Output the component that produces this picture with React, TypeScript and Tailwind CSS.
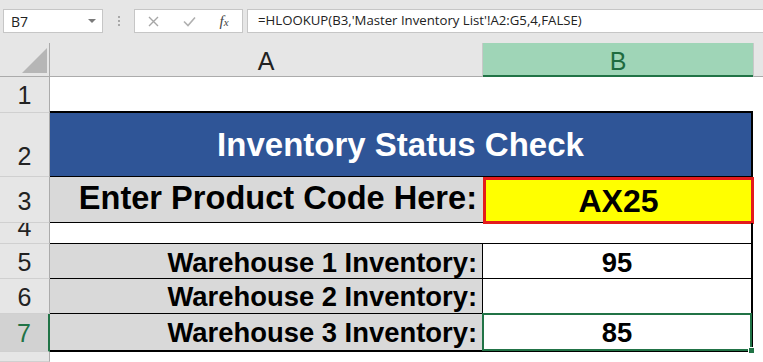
import React from "react";

function RowHead({ label, h, pad, selected }: { label: string; h: string; pad: string; selected?: boolean }) {
  return (
    <div
      className={
        "w-[50px] shrink-0 flex justify-center overflow-hidden text-[25px] leading-none border-b border-b-[#d0d0d0] " +
        pad +
        " " +
        h +
        (selected
          ? " bg-[#d2d2d2] text-[#217346] border-r-2 border-r-[#217346]"
          : " bg-[#e6e6e6] text-[#222] border-r border-r-[#ababab]")
      }
    >
      <span>{label}</span>
    </div>
  );
}

export default function App() {
  return (
    <div className="w-[763px] h-[362px] overflow-hidden bg-white font-['Liberation_Sans',Arial,sans-serif] text-black">
      {/* formula bar */}
      <div className="h-[43px] bg-[#e6e6e6] flex items-start pt-[9px] pl-[3px]">
        <div className="w-[100px] h-[24px] shrink-0 bg-white border border-[#c6c6c6] flex items-center justify-between pl-[7px] pr-[6px]">
          <span className="text-[14px] text-[#222] font-['Open_Sans',sans-serif]">B7</span>
          <svg width="8" height="5" viewBox="0 0 8 5">
            <polygon points="0,0 8,0 4,4" fill="#7a7a7a" />
          </svg>
        </div>
        <div className="w-[31px] h-[24px] shrink-0 flex flex-col items-center justify-center gap-[2px]">
          <div className="w-[2px] h-[2px] bg-[#a8a8a8]" />
          <div className="w-[2px] h-[2px] bg-[#a8a8a8]" />
          <div className="w-[2px] h-[2px] bg-[#a8a8a8]" />
        </div>
        <div className="w-[109px] h-[24px] shrink-0 bg-white border border-[#c6c6c6] flex items-center">
          <div className="w-[37px] flex justify-center">
            <svg width="11" height="11" viewBox="0 0 11 11">
              <path d="M1 1 L10 10 M10 1 L1 10" stroke="#a6a6a6" strokeWidth="1.4" fill="none" />
            </svg>
          </div>
          <div className="w-[34px] flex justify-center">
            <svg width="13" height="11" viewBox="0 0 13 11">
              <path d="M1 5.5 L5 9.5 L12 1.5" stroke="#b0b0b0" strokeWidth="1.6" fill="none" />
            </svg>
          </div>
          <div className="w-[36px] flex justify-center">
            <span className="font-['Liberation_Serif',serif] italic text-[15px] text-[#444] leading-none">
              f<span className="text-[11px]">x</span>
            </span>
          </div>
        </div>
        <div className="ml-[4px] flex-1 h-[24px] bg-white border-y border-l border-[#c6c6c6] flex items-center pl-[10px]">
          <span className="text-[13.2px] text-[#222] font-['Open_Sans',sans-serif] whitespace-nowrap">
            =HLOOKUP(B3,'Master Inventory List'!A2:G5,4,FALSE)
          </span>
        </div>
      </div>

      {/* column headers */}
      <div className="h-[34px] flex">
        <div className="w-[50px] shrink-0 bg-[#e6e6e6] border-r border-r-[#ababab] border-b border-b-[#ababab]">
          <svg width="49" height="33" viewBox="0 0 49 33">
            <polygon points="22,30 47,30 47,5" fill="#b6b6b6" />
          </svg>
        </div>
        <div className="w-[433px] shrink-0 bg-[#e6e6e6] border-r border-r-[#c8c8c8] border-b border-b-[#ababab] flex justify-center items-end pb-[2px] text-[25px] leading-none text-[#222]">
          A
        </div>
        <div className="w-[270px] shrink-0 bg-[#9fd5b7] border-b-2 border-b-[#217346] flex justify-center items-end pb-[1px] text-[25px] leading-none text-[#1e6b3f]">
          B
        </div>
        <div className="flex-1 bg-[#e6e6e6] border-l border-l-[#c8c8c8] border-b border-b-[#ababab]" />
      </div>

      {/* row 1 */}
      <div className="flex">
        <RowHead label="1" h="h-[36px]" pad="items-end pb-[4px]" />
        <div className="w-[703px] shrink-0 border-b-2 border-b-black" />
        <div className="flex-1" />
      </div>

      {/* row 2 */}
      <div className="flex">
        <RowHead label="2" h="h-[64px]" pad="items-end pb-[7px]" />
        <div className="w-[703px] h-[64px] shrink-0 bg-[#2f5597] border-r-2 border-r-black border-b border-b-black flex items-center justify-center">
          <span className="text-white font-bold text-[33px] leading-none whitespace-nowrap">Inventory Status Check</span>
        </div>
        <div className="flex-1" />
      </div>

      {/* row 3 */}
      <div className="flex">
        <RowHead label="3" h="h-[46px]" pad="items-end pb-[8px]" />
        <div className="w-[433px] h-[46px] shrink-0 bg-[#d9d9d9] border-b border-b-black flex justify-end items-end pr-[6px] pb-[7px]">
          <span className="font-bold text-[32.6px] leading-none whitespace-nowrap">Enter Product Code Here:</span>
        </div>
        <div className="w-[271px] h-[47px] shrink-0 bg-[#ffff00] border-[3px] border-[#e41b1b] flex justify-center items-center">
          <span className="font-bold text-[32px] leading-none">AX25</span>
        </div>
        <div className="flex-1" />
      </div>

      {/* row 4 */}
      <div className="flex -mt-[1px]">
        <RowHead label="4" h="h-[21px]" pad="items-end pb-[3px]" />
        <div className="w-[433px] h-[21px] shrink-0 border-b border-b-black" />
        <div className="w-[270px] h-[21px] shrink-0 border-b border-b-black border-r-2 border-r-black" />
        <div className="flex-1" />
      </div>

      {/* row 5 */}
      <div className="flex">
        <RowHead label="5" h="h-[35px]" pad="items-end pb-[3px]" />
        <div className="w-[433px] h-[35px] shrink-0 bg-[#d9d9d9] border-b border-b-black border-r border-r-black flex justify-end items-end pr-[5px] pb-[2px]">
          <span className="font-bold text-[27.4px] leading-none whitespace-nowrap">Warehouse 1 Inventory:</span>
        </div>
        <div className="w-[270px] h-[35px] shrink-0 border-b border-b-black border-r-2 border-r-black flex justify-center items-end pb-[2px]">
          <span className="font-bold text-[27.4px] leading-none">95</span>
        </div>
        <div className="flex-1" />
      </div>

      {/* row 6 */}
      <div className="flex">
        <RowHead label="6" h="h-[35px]" pad="items-end pb-[3px]" />
        <div className="w-[433px] h-[35px] shrink-0 bg-[#d9d9d9] border-b border-b-black border-r border-r-black flex justify-end items-end pr-[5px] pb-[3px]">
          <span className="font-bold text-[27.4px] leading-none whitespace-nowrap">Warehouse 2 Inventory:</span>
        </div>
        <div className="w-[270px] h-[35px] shrink-0 border-b border-b-black border-r-2 border-r-black" />
        <div className="flex-1" />
      </div>

      {/* row 7 */}
      <div className="flex">
        <RowHead label="7" h="h-[38px]" pad="items-end pb-[5px]" selected />
        <div className="w-[433px] h-[38px] shrink-0 bg-[#d9d9d9] border-b-2 border-b-black border-r border-r-black flex justify-end items-end pr-[5px] pb-[4px]">
          <span className="font-bold text-[27.4px] leading-none whitespace-nowrap">Warehouse 3 Inventory:</span>
        </div>
        <div className="relative w-[270px] h-[38px] shrink-0 border-b-2 border-b-black border-r-2 border-r-black flex justify-center items-end pb-[4px]">
          <span className="font-bold text-[27.4px] leading-none">85</span>
          <div className="absolute -left-[1px] -top-[1px] -right-[1px] -bottom-[1px] border-2 border-[#217346]" />
          <div className="absolute -right-[4px] -bottom-[4px] w-[7px] h-[7px] bg-[#217346] border border-white z-10" />
        </div>
        <div className="flex-1" />
      </div>

      {/* row 8 */}
      <div className="flex">
        <RowHead label="8" h="h-[10px]" pad="items-start pt-[6px]" />
        <div className="flex-1" />
      </div>
    </div>
  );
}
